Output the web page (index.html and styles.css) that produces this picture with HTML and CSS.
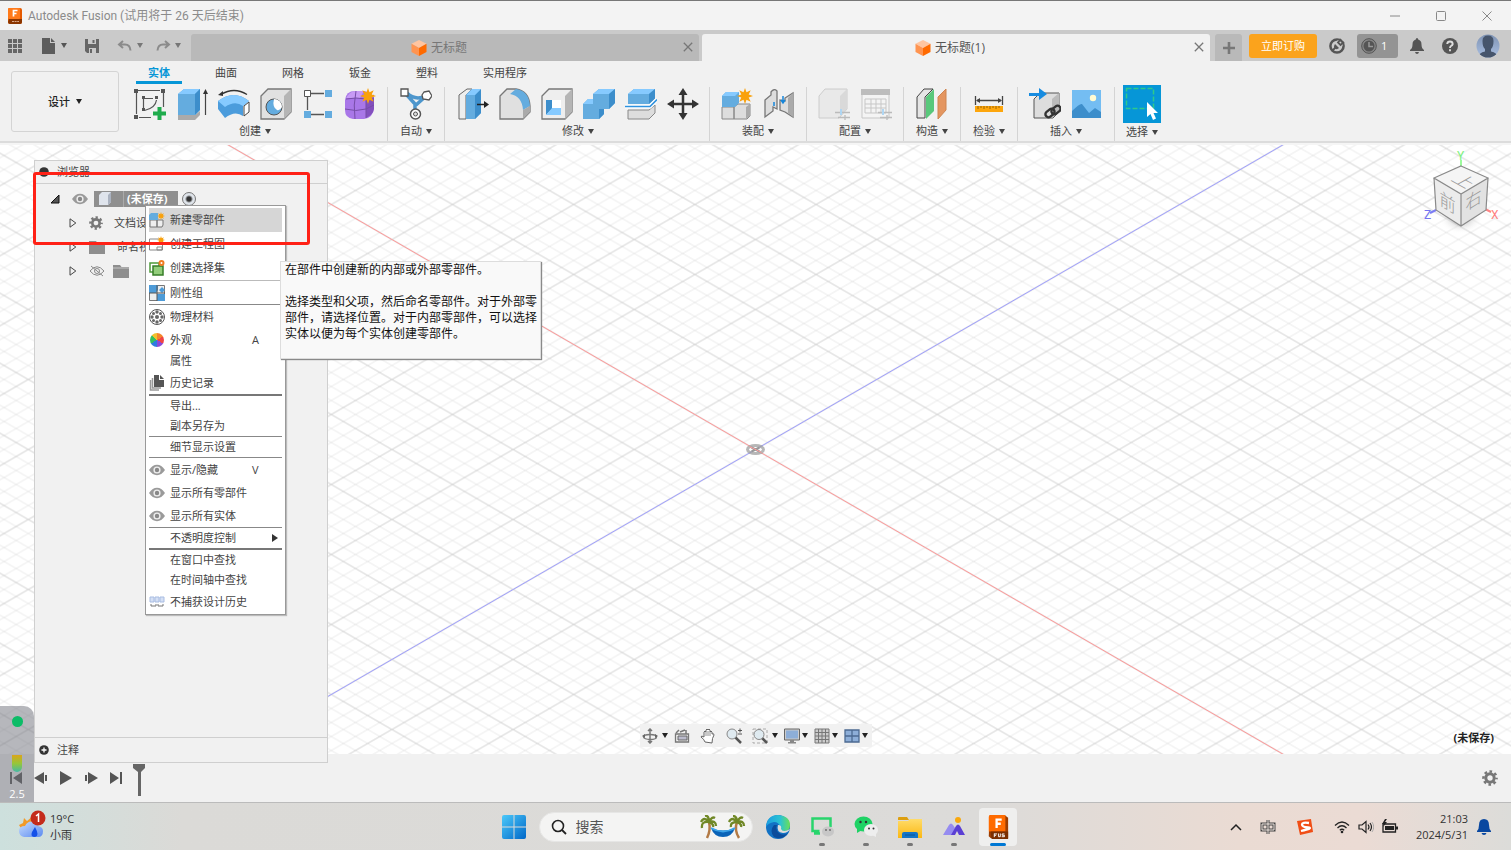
FILE: index.html
```html
<!DOCTYPE html>
<html lang="zh-CN">
<head>
<meta charset="utf-8">
<title>Autodesk Fusion</title>
<link rel="stylesheet" href="styles.css">
</head>
<body>
<svg class="defs" aria-hidden="true">
  <defs>
    <symbol id="caret" viewBox="0 0 6 5"><path d="M0 0h6L3 5z" fill="currentColor"/></symbol>
    <symbol id="eye" viewBox="0 0 16 12"><path d="M0 6Q3.500 .8 8 .8T16 6Q12.500 11.200 8 11.200T0 6z" fill="#9a9a9a"/><circle cx="8" cy="6" r="3.600" fill="#eee"/><circle cx="8" cy="6" r="2.200" fill="#888"/></symbol>
    <symbol id="gear" viewBox="0 0 16 16"><g fill="none" stroke="currentColor"><circle cx="8" cy="8" r="4.200" stroke-width="3"/><circle cx="8" cy="8" r="6.500" stroke-width="2.600" stroke-dasharray="2.600 2.505" stroke-dashoffset="1.300"/></g></symbol>
    <symbol id="folder" viewBox="0 0 16 13"><path d="M0 0h7l1.500 2H16v11H0z" fill="#8e8e8e"/><path d="M0 3h16" stroke="#c4c4c4"/></symbol>
    <symbol id="star" viewBox="0 0 16 16"><path d="M8 0l1.500 4.300L13.700 2.300 11.700 6.500 16 8l-4.300 1.500 2 4.200-4.200-2L8 16l-1.500-4.300-4.200 2 2-4.200L0 8l4.300-1.500-2-4.200 4.200 2z" fill="#f9a10b"/></symbol>
    <symbol id="cube" viewBox="0 0 16 16"><path d="M8 0l7.500 3.800L8 8 .5 3.800z" fill="#ffc5a0"/><path d="M.5 3.800L8 8v8L.5 12z" fill="#ff9450"/><path d="M15.500 3.800L8 8v8l7.500-4z" fill="#ff6a00"/></symbol>
    <symbol id="tri" viewBox="0 0 8 10"><path d="M1 .8L6.800 5 1 9.200z" fill="none" stroke="#444"/></symbol>
    <symbol id="cross" viewBox="0 0 10 10"><path d="M.8.8l8.400 8.400M9.200.8L.8 9.200" stroke="currentColor" stroke-width="1.300"/></symbol>
    <linearGradient id="win" x1="0" y1="0" x2="1" y2="1"><stop offset="0" stop-color="#4cc9fa"/><stop offset="1" stop-color="#0067c8"/></linearGradient>
    <linearGradient id="edgeA" x1="0" y1="0" x2="1" y2="0"><stop offset="0" stop-color="#1b9de2"/><stop offset=".6" stop-color="#2bc3d2"/><stop offset="1" stop-color="#6be054"/></linearGradient>
    <linearGradient id="avatar" x1="0" y1="0" x2="0" y2="1"><stop offset="0" stop-color="#7f93b3"/><stop offset="1" stop-color="#a9bfe2"/></linearGradient>
    <linearGradient id="folderG" x1="0" y1="0" x2="0" y2="1"><stop offset="0" stop-color="#ffdc6a"/><stop offset="1" stop-color="#fbb813"/></linearGradient>
    <linearGradient id="cloud" x1="0" y1="0" x2="1" y2="1"><stop offset="0" stop-color="#c8deff"/><stop offset="1" stop-color="#5b8af0"/></linearGradient>
  </defs>
</svg>

<div class="app">
  <header class="titlebar">
    <svg class="i16" viewBox="0 0 16 16"><rect x="1" width="14" height="16" rx="2" fill="#e55a00"/><rect x="1" width="12" height="11" rx="1" fill="#ff7a1a"/><path d="M2 11h13v3q0 2-2 2H3q-2 0-2-2z" fill="#8a3500"/><path d="M6.500 8.500V2.500h4M6.500 5.500h3" stroke="#fff" stroke-width="1.700" fill="none"/><path d="M5 13.500h7" stroke="#d9a98a" stroke-dasharray="2 .6"/></svg>
    <h1 class="title">Autodesk Fusion (试用将于 26 天后结束)</h1>
    <div class="winbtns">
      <button aria-label="最小化"><svg class="i12" viewBox="0 0 12 12"><path d="M1 6h10" stroke="#888"/></svg></button>
      <button aria-label="最大化"><svg class="i12" viewBox="0 0 12 12"><rect x="1.500" y="1.500" width="9" height="9" rx="1" fill="none" stroke="#888"/></svg></button>
      <button aria-label="关闭"><svg class="i12" viewBox="0 0 12 12"><path d="M1.500 1.500l9 9M10.500 1.500l-9 9" stroke="#888"/></svg></button>
    </div>
  </header>

  <div class="tabbar">
    <div class="quick">
      <button class="q1" aria-label="数据面板"><svg class="i16" viewBox="0 0 16 16" fill="#666"><path d="M1 1h4v4H1zM6 1h4v4H6zM11 1h4v4h-4zM1 6h4v4H1zM6 6h4v4H6zM11 6h4v4h-4zM1 11h4v4H1zM6 11h4v4H6zM11 11h4v4h-4z"/></svg></button>
      <button class="q2" aria-label="文件"><svg class="i16" viewBox="0 0 16 16"><path d="M1 0h8v5h5v11H1z" fill="#5c5c5c"/><path d="M10 0l4 4h-4z" fill="#5c5c5c"/></svg><svg class="caret"><use href="#caret"/></svg></button>
      <button class="q3" aria-label="保存"><svg class="i16" viewBox="0 0 16 16"><path d="M1 1h14v14H3l-2-2z" fill="#666"/><path d="M4 1h8v5H4zM5 10h7v5H5z" fill="#cacaca"/><path d="M8.500 2h2v3h-2zM6 11h2v4H6z" fill="#666"/></svg></button>
      <button class="q4" aria-label="撤消"><svg class="i16" viewBox="0 0 16 16"><path d="M6 3L2 6.500 6 10M2 6.500h6q5 0 5.500 6" fill="none" stroke="#8b8b8b" stroke-width="2"/></svg><svg class="caret"><use href="#caret"/></svg></button>
      <button class="q5" aria-label="恢复"><svg class="i16" viewBox="0 0 16 16"><path d="M10 3l4 3.500L10 10M14 6.500H8q-5 0-5.500 6" fill="none" stroke="#8b8b8b" stroke-width="2"/></svg><svg class="caret"><use href="#caret"/></svg></button>
    </div>
    <div class="doc doc-off"><svg class="i16"><use href="#cube"/></svg><span>无标题</span><button class="x" aria-label="关闭"><svg class="i10"><use href="#cross"/></svg></button></div>
    <div class="doc doc-on"><svg class="i16"><use href="#cube"/></svg><span>无标题(1)</span><button class="x" aria-label="关闭"><svg class="i10"><use href="#cross"/></svg></button></div>
    <button class="plus" aria-label="新建"><svg class="i12" viewBox="0 0 12 12"><path d="M6 0v12M0 6h12" stroke="#777" stroke-width="2.600"/></svg></button>
    <button class="buy">立即订购</button>
    <button class="t1" aria-label="扩展"><svg class="i16" viewBox="0 0 16 16"><circle cx="8" cy="8" r="6.600" fill="none" stroke="#555" stroke-width="2.500"/><path d="M9 2l-5 5 2 4 3 1 5-5-2-3z" fill="#cacaca"/><path d="M3.500 12.500l3-3M12 1l-3 3.500 2.500 2.500L15 4" stroke="#555" stroke-width="1.800" fill="none"/><path d="M6 6l4 4q-2 2-4 .5T6 6z" fill="#555"/></svg></button>
    <button class="jobs" aria-label="作业状态"><svg class="i16" viewBox="0 0 16 16"><circle cx="8" cy="8" r="7.300" fill="#888" stroke="#555"/><circle cx="8" cy="8" r="5.500" fill="#555"/><path d="M8 4v4.500h4" stroke="#999" stroke-width="1.500" fill="none"/></svg><span>1</span></button>
    <button class="t2" aria-label="通知"><svg class="i16" viewBox="0 0 16 16" fill="#555"><path d="M8 0q1.200 0 1.200 1.600Q12.500 2.500 12.500 6.500q0 4 2.500 5.500v1H1v-1q2.500-1.500 2.500-5.500 0-4 3.300-4.900Q6.800 0 8 0zM6 14h4q-.5 2-2 2t-2-2z"/></svg></button>
    <button class="t2" aria-label="帮助"><svg class="i16" viewBox="0 0 16 16"><circle cx="8" cy="8" r="8" fill="#555"/><path d="M5.200 6q.2-2.500 2.800-2.500T10.700 6Q10.500 7.200 9 8 8 8.600 8 10M8 11.300v2" stroke="#ddd" stroke-width="1.900" fill="none"/></svg></button>
    <button class="me" aria-label="账户"><svg class="i24" viewBox="0 0 24 24"><clipPath id="ac"><circle cx="12" cy="12" r="11.500"/></clipPath><g clip-path="url(#ac)"><path d="M0 0h24v24H0z" fill="url(#avatar)"/><path d="M6.500 7q0-5.500 5.500-5.500T17.500 7q0 6-2.500 8v2.500q6 1 8 6.500H1q2-5.500 8-6.500V15Q6.500 13 6.500 7z" fill="#46556c"/></g></svg></button>
  </div>

  <div class="ribbon">
    <button class="workspace">设计 <svg class="caret"><use href="#caret"/></svg></button>
    <div class="tools">
      <nav class="rtabs">
        <button class="on">实体</button><button>曲面</button><button>网格</button><button>钣金</button><button>塑料</button><button>实用程序</button>
      </nav>
      <div class="groups">
        <section class="group"><div class="icons">
          <button aria-label="创建草图"><svg class="i32" viewBox="0 0 32 32"><g stroke="#555" fill="none" stroke-width="1.200"><path d="M4 2.500h22M2.500 4v22M29.500 5v14M5 29.500h12M10 10.500h9M9.500 11v10M22.500 12q-1 8-12 10.500"/></g><path d="M0 1h4v4H0zM27 1h4v4h-4zM0 27h4v4H0zM8 8h3v3H8zM21 8h3v3h-3zM8 20h3v3H8z" fill="#555"/><path d="M19 25.500h13M25.500 19v13" stroke="#1fab4c" stroke-width="4"/></svg></button>
          <button aria-label="拉伸"><svg class="i32" viewBox="0 0 32 32"><path d="M2 27h17l5-4v4l-5 5H2z" fill="#aaa"/><path d="M2 6l6-5h16v21l-5 5H2z" fill="#64acdf"/><path d="M2 6l6-5h16l-5 5z" fill="#86caff"/><path d="M19 6l5-5v21l-5 5z" fill="#3d8ecb"/><path d="M29.500 27V4" stroke="#444" stroke-width="1.200"/><path d="M27 6l2.500-5L32 6z" fill="#333"/></svg></button>
          <button aria-label="旋转"><svg class="i32" viewBox="0 0 32 32"><path d="M0 13q16-12 31 0l-6 5v10q-8-6-18 2L0 21z" fill="#4b9cdc"/><path d="M0 13q16-12 31 0l-6 5q-8-6-18 1z" fill="#86caff"/><path d="M26 18l5-4v10l-5 4z" fill="#fff" stroke="#444"/><path d="M3 6.500q13-8 26 0" fill="none" stroke="#333" stroke-width="1.300"/><path d="M0 7l5-4v5z" fill="#333"/></svg></button>
          <button aria-label="孔"><svg class="i32" viewBox="0 0 32 32"><path d="M1 8l7-7h23v23l-7 7H1z" fill="#e1e1e1" stroke="#777" stroke-width="1.300"/><path d="M24 8l7-7v23l-7 7z" fill="#b5b5b5"/><circle cx="14" cy="19" r="8" fill="#64acdf" stroke="#555"/><path d="M14 11a8 8 0 018 8q-2 4-5 3-5-3-3-11z" fill="#fff"/></svg></button>
          <button aria-label="阵列"><svg class="i32" viewBox="0 0 32 32"><path d="M9 5.500h13M5.500 9v13M9 26.500h13" stroke="#555" stroke-width="1.300"/><path d="M2.500 2.500h6v6h-6z" fill="#fff" stroke="#555"/><path d="M23 2h7v7h-7zM2 23h7v7H2zM23 23h7v7h-7z" fill="#64acdf"/></svg></button>
          <button aria-label="创建形状"><svg class="i32" viewBox="0 0 32 32"><path d="M1 12Q2 3 11 3h9q8 1 10 8v9q-1 10-10 11H9q-8-1-8-9z" fill="#a977e8"/><path d="M2 11q3-8 10-8h8l-4 7H3z" fill="#c79af5"/><path d="M22 12l8-3v12q-1 6-8 9z" fill="#8350bd"/><path d="M2 11q10-2 20 0 5-1 8-4M12 3q-3 14-1 28M22 10v20M1 21q11 3 21 0l8-4" fill="none" stroke="#764da7"/><use href="#star" x="16" y="0" width="16" height="16"/></svg></button>
        </div><button class="glabel">创建 <svg class="caret"><use href="#caret"/></svg></button></section>
        <section class="group solo"><div class="icons">
          <button aria-label="自动建模"><svg class="i32" viewBox="0 0 32 32"><path d="M6 6l9 10v9M26 8L16 17M7 5q8 8 19 3" fill="none" stroke="#4d96cc" stroke-width="3.500"/><path d="M1 1h7v7H1zM24 4l5-1 3 5-3 4-6-1-1-4z" fill="#fff" stroke="#555" stroke-width="1.300"/><circle cx="15.500" cy="26" r="5" fill="#fff" stroke="#555" stroke-width="1.500"/><circle cx="15.500" cy="26" r="2" fill="#ddd" stroke="#555"/></svg></button>
        </div><button class="glabel">自动 <svg class="caret"><use href="#caret"/></svg></button></section>
        <section class="group modify"><div class="icons">
          <button aria-label="按拉"><svg class="i32" viewBox="0 0 32 32"><path d="M10 1l-8 6v24h7V7l6-6z" fill="#eee" stroke="#666"/><path d="M9 7l6-6h9v24l-6 6H9z" fill="#64acdf"/><path d="M18 7l6-6v24l-6 6z" fill="#3d8ecb"/><path d="M9 7l6-6h9l-6 6z" fill="#86caff"/><path d="M20 16.500h9" stroke="#222" stroke-width="1.500"/><path d="M27 13l5 3.500-5 3.500z" fill="#222"/></svg></button>
          <button aria-label="圆角"><svg class="i32" viewBox="0 0 32 32"><path d="M1 8l7-7h9q13 2 14 17v6l-7 7H1z" fill="#e0e0e0" stroke="#777" stroke-width="1.300"/><path d="M11 6l6-5q13 2 14 17l-7 4Q23 8 11 6z" fill="#64acdf"/><path d="M24 22l7-4v6l-7 7z" fill="#aaa"/></svg></button>
          <button aria-label="抽壳"><svg class="i32" viewBox="0 0 32 32"><path d="M1 8l7-7h23v23l-7 7H1z" fill="#eee" stroke="#777" stroke-width="1.300"/><path d="M24 8l7-7v23l-7 7z" fill="#b5b5b5"/><path d="M5 12h15v15H5z" fill="#fff"/><path d="M5 12h6v9l-6 6z" fill="#3d8ecb"/><path d="M5 27l6-7h9v7z" fill="#86caff"/></svg></button>
          <button aria-label="合并"><svg class="i32" viewBox="0 0 32 32"><path d="M0 16l5-5h5V6l6-5h16v14l-6 6h-5v5l-5 5H0z" fill="#64acdf"/><path d="M10 6l6-5h16l-6 5zM0 16l5-5h5v5z" fill="#86caff"/><path d="M26 6l6-5v14l-6 6zM16 21h5v5l-5 5z" fill="#3d8ecb"/></svg></button>
          <button aria-label="分割实体"><svg class="i32" viewBox="0 0 32 32"><path d="M3 6l6-5h21v10l-6 5H3z" fill="#64acdf"/><path d="M3 6l6-5h21l-6 5z" fill="#86caff"/><path d="M24 6l6-5v10l-6 5z" fill="#3d8ecb"/><path d="M3 22h21l6-5v8l-6 6H3z" fill="#ddd" stroke="#888"/><path d="M0 18.500h25l7-7" fill="none" stroke="#fff" stroke-width="4"/><path d="M0 18.500h25l7-7" fill="none" stroke="#2f92de" stroke-width="1.600"/></svg></button>
          <button aria-label="移动"><svg class="i32" viewBox="0 0 32 32"><path d="M16 4v24M4 16h24" stroke="#333" stroke-width="2.500"/><path d="M11.500 7L16 0l4.500 7zM11.500 25l4.500 7 4.500-7zM7 11.500L0 16l7 4.500zM25 11.500l7 4.500-7 4.500z" fill="#333"/></svg></button>
        </div><button class="glabel">修改 <svg class="caret"><use href="#caret"/></svg></button></section>
        <section class="group"><div class="icons">
          <button aria-label="新建零部件"><svg class="i32" viewBox="0 0 32 32"><path d="M1 19h12v12H1zM13 19l4-3h12v12l-3 3H13z" fill="#ddd" stroke="#888"/><path d="M1 8l4-4h13v11l-4 4H1z" fill="#64acdf"/><path d="M1 8l4-4h13l-4 4z" fill="#86caff"/><path d="M25 19l4-3v12l-4 3z" fill="#aaa"/><use href="#star" x="16" y="0" width="16" height="16"/></svg></button>
          <button aria-label="联接"><svg class="i32" viewBox="0 0 32 32"><path d="M2 12l6-5V4q3-4 6-1v18l-4-2v4l-8 6z" fill="#ddd" stroke="#777" stroke-width="1.300"/><path d="M30 5v24l-8-5-5-2V12l5 1v-3z" fill="#ddd" stroke="#777" stroke-width="1.300"/><path d="M30 5v24l-5-4V10z" fill="#aaa"/><path d="M11 14v4M20 8v6M18 12l2 3 2-3" fill="none" stroke="#1686db" stroke-width="1.500"/></svg></button>
        </div><button class="glabel">装配 <svg class="caret"><use href="#caret"/></svg></button></section>
        <section class="group"><div class="icons">
          <button aria-label="配置零件" disabled><svg class="i32" viewBox="0 0 32 32"><path d="M1 8l6-7h22v20l-8 9H1z" fill="#e9e9e9" stroke="#ccc"/><path d="M22 8l7-7v20l-7 7z" fill="#d9d9d9"/><path d="M17 24.500h15M20 29.500h12M27 27v5" stroke="#bbb" stroke-width="1.300"/><path d="M23 21v6" stroke="#afd6f3" stroke-width="2"/></svg></button>
          <button aria-label="配置表" disabled><svg class="i32" viewBox="0 0 32 32"><path d="M2 3h27v27H2z" fill="#f4f4f4" stroke="#c7c7c7"/><path d="M1 1h29v6H1z" fill="#bdbdbd"/><path d="M5 11h21v14H5zM5 16h21M5 20h21M11 11v14M16 11v14M21 11v14" fill="none" stroke="#c7c7c7"/><path d="M18 24.500h14M20 29.500h12M27 27v5" stroke="#bbb" stroke-width="1.300"/><path d="M23 21v6" stroke="#afd6f3" stroke-width="2"/></svg></button>
        </div><button class="glabel">配置 <svg class="caret"><use href="#caret"/></svg></button></section>
        <section class="group solo"><div class="icons">
          <button aria-label="偏移平面"><svg class="i32" viewBox="0 0 32 32"><path d="M1 9l7-8h9l-8 8v21H1z" fill="#e5e5e5" stroke="#444"/><path d="M10 9l8-8v22l-8 8z" fill="#58c87b"/><path d="M22 9l8-8v21l-8 9z" fill="#e49660" stroke="#cf8550"/></svg></button>
        </div><button class="glabel">构造 <svg class="caret"><use href="#caret"/></svg></button></section>
        <section class="group solo"><div class="icons">
          <button aria-label="测量"><svg class="i32" viewBox="0 0 32 32"><path d="M2.500 8v9M29.500 8v9M4 12.500h24" stroke="#444" stroke-width="1.300"/><path d="M3 12.500l4-2.500v5zM29 12.500L25 10v5z" fill="#444"/><path d="M2 18h28v6H2z" fill="#fda60c"/><path d="M5 18v3M8 18v2M11 18v3M14 18v2M17 18v3M20 18v2M23 18v3M26 18v2" stroke="#805400" stroke-width=".8"/></svg></button>
        </div><button class="glabel">检验 <svg class="caret"><use href="#caret"/></svg></button></section>
        <section class="group"><div class="icons">
          <button aria-label="插入衍生"><svg class="i32" viewBox="0 0 32 32"><path d="M5 11l6-6h19v19l-6 6H5z" fill="#ddd" stroke="#555"/><path d="M23 11l7-6v19l-7 6z" fill="#bbb"/><path d="M0 5h10V0l8 6-8 6V8H0z" fill="#168be0"/><g fill="none" stroke="#333" stroke-width="2.400"><rect x="16" y="22" width="10" height="6" rx="3" transform="rotate(-38 21 25)"/><rect x="22" y="19" width="10" height="6" rx="3" transform="rotate(-38 27 22)"/></g></svg></button>
          <button aria-label="画布"><svg class="i32" viewBox="0 0 32 32"><path d="M1 2h29v28H1z" fill="#74bdf2"/><circle cx="22" cy="10" r="3.200" fill="#fffbd2"/><path d="M1 23q8-8 10-7l7 9 6-5 6 4v6H1z" fill="#3d8ecb"/></svg></button>
        </div><button class="glabel">插入 <svg class="caret"><use href="#caret"/></svg></button></section>
        <section class="group last"><div class="icons">
          <button class="select" aria-label="选择"><svg class="i38" viewBox="0 0 38 38"><path d="M3.500 3.500h27v20h-27z" fill="none" stroke="#2fc98b" stroke-width="1.500" stroke-dasharray="5 2"/><path d="M24 17v15l3.500-3 2.500 6 3-1.500-2.500-5.500H35z" fill="#fff"/></svg></button>
        </div><button class="glabel">选择 <svg class="caret"><use href="#caret"/></svg></button></section>
      </div>
    </div>
  </div>

  <main class="canvas">
    <svg class="grid" aria-hidden="true">
      <defs>
        <pattern id="iso" width="121.200" height="70" patternUnits="userSpaceOnUse">
          <path stroke="#e8e8e8" stroke-width=".9" d="M0-56l121.200 70M0-42l121.200 70M0-28l121.200 70M0-14l121.200 70M0 14l121.200 70M0 28l121.200 70M0 42l121.200 70M0 56l121.200 70M0 14l121.200-70M0 28l121.200-70M0 42l121.200-70M0 56l121.200-70M0 84l121.200-70M0 98l121.200-70M0 112l121.200-70M0 126l121.200-70"/>
          <path stroke="#d2d2d2" d="M0 0l121.200 70M0 70L121.200 0"/>
        </pattern>
      </defs>
      <svg x="50%" y="50%" overflow="visible">
        <rect x="-1939.200" y="-1050" width="3878.400" height="2100" fill="url(#iso)"/>
        <path d="M-1212-700L1212 700" stroke="#ff9a9a"/><path d="M-1212 700L1212-700" stroke="#a0a0ff"/>
        <ellipse cx="0" cy="0" rx="8" ry="4" fill="none" stroke="#999" stroke-opacity=".7" stroke-width="3"/>
        <path d="M-4-2L4 2M-4 2l8-4" stroke="#999" stroke-width="2"/><path d="M-6-3L6 3" stroke="#ff9e9e"/>
      </svg>
    </svg>

    <svg class="viewcube" viewBox="0 0 76 86" role="img" aria-label="ViewCube">
      <defs><radialGradient id="sh"><stop offset="0" stop-color="#777"/><stop offset="1" stop-color="#fff" stop-opacity="0"/></radialGradient></defs>
      <ellipse cx="38" cy="68" rx="22" ry="16" fill="url(#sh)" opacity=".7"/>
      <path d="M38 16V10" stroke="#7dfa7d" stroke-width="1.500"/><path d="M13 60l-6 3" stroke="#7b7bf5" stroke-width="2"/><path d="M62 59l6 3" stroke="#ff8585" stroke-width="2"/>
      <path d="M38 16l27 12-27 16L11 28z" fill="#f5f5f5"/><path d="M11 28l27 16v32L13 60z" fill="#ececec"/><path d="M65 28L38 44v32l25-16z" fill="#e2e2e2"/>
      <path d="M38 16l27 12-27 16L11 28zM11 28l2 32 25 16 25-16 2-32M38 44v32" fill="none" stroke="#8a8a8a" stroke-width="1.200"/>
      <text class="face" transform="matrix(.9 .5 -.9 .5 38 23)" x="1" y="13">上</text>
      <text class="face" transform="matrix(.9 .55 0 1 13 32)" x="4" y="20">前</text>
      <text class="face" transform="matrix(.9 -.55 0 1 38 44)" x="5" y="20">右</text>
      <text class="axis y" x="34" y="10">Y</text><text class="axis z" x="1" y="69">Z</text><text class="axis xx" x="68" y="69">X</text>
    </svg>

    <aside class="browser">
      <div class="bhead"><svg class="i10" viewBox="0 0 10 10"><circle cx="5" cy="5" r="4.800" fill="#333"/></svg><span>浏览器</span></div>
      <div class="tree">
        <div class="row root"><svg class="i10" viewBox="0 0 10 10"><path d="M9 1v8H1z" fill="#555" stroke="#111"/></svg><svg class="eye"><use href="#eye"/></svg>
          <span class="node"><svg class="i16" viewBox="0 0 16 16"><path d="M2 4l3-3h9v10l-3 3H2z" fill="#dfe4ec"/><path d="M11 4l3-3v10l-3 3z" fill="#aab2c0"/></svg><b>(未保存)</b></span><input type="radio" checked aria-label="激活零部件"></div>
        <div class="row"><svg class="tri"><use href="#tri"/></svg><svg class="gear"><use href="#gear"/></svg><span>文档设置</span></div>
        <div class="row"><svg class="tri"><use href="#tri"/></svg><svg class="folder"><use href="#folder"/></svg><span>命名视图</span></div>
        <div class="row deep"><svg class="tri"><use href="#tri"/></svg><svg class="eye" viewBox="0 0 16 12"><path d="M1 6Q8-2.500 15 6 8 14.500 1 6z" fill="none" stroke="#888"/><circle cx="8" cy="6" r="2.500" fill="none" stroke="#888"/><path d="M2 1l12 10" stroke="#888"/></svg><svg class="folder"><use href="#folder"/></svg><span>原点</span></div>
      </div>
      <div class="bfoot"><svg class="i10" viewBox="0 0 10 10"><circle cx="5" cy="5" r="4.800" fill="#333"/><path d="M5 2.500v5M2.500 5h5" stroke="#fff" stroke-width="1.300"/></svg><span>注释</span></div>
    </aside>

    <div class="menu" role="menu">
      <button class="mi tall hot"><svg class="i16" viewBox="0 0 16 16"><path d="M1 8h7v7H1zM8 8h6v5l-1 2H8z" fill="#eee" stroke="#777"/><path d="M0 3l2-2h7v7H0z" fill="#64acdf"/><use href="#star" x="8" y="0" width="8" height="8"/></svg><span>新建零部件</span></button>
      <button class="mi tall"><svg class="i16" viewBox="0 0 16 16"><path d="M.500 3h13v11H.500zM3 8h5M8 11h5v3H8z" fill="#fff" stroke="#888"/><use href="#star" x="8" y="0" width="8" height="8"/></svg><span>创建工程图</span></button>
      <button class="mi tall"><svg class="i16" viewBox="0 0 16 16"><path d="M1 3h9v9H1z" fill="none" stroke="#4d9a3a" stroke-width="1.500"/><path d="M4 6h10v9H4z" fill="#93cd7b" stroke="#377d28" stroke-width="1.500"/><circle cx="12.500" cy="3" r="2" fill="#fff" stroke="#f07c22" stroke-width="2"/></svg><span>创建选择集</span></button>
      <hr>
      <button class="mi icon"><svg class="i16" viewBox="0 0 16 16"><path d="M.500.500h15v15H.500z" fill="#eee" stroke="#777"/><path d="M0 0h9v5L7 8H0zM8 9h8v7H8zM10 5l3-3 3 3-3 3z" fill="#4d9bd8"/><path d="M8 0v16M0 8h16" stroke="#555"/></svg><span>刚性组</span></button>
      <hr class="dark">
      <button class="mi icon"><svg class="i16" viewBox="0 0 16 16"><circle cx="8" cy="8" r="7.500" fill="#fff" stroke="#555"/><g fill="#666"><circle cx="8" cy="8" r="2"/><circle cx="8" cy="3" r="1.700"/><circle cx="8" cy="13" r="1.700"/><circle cx="3" cy="8" r="1.700"/><circle cx="13" cy="8" r="1.700"/><circle cx="4.500" cy="4.500" r="1.500"/><circle cx="11.500" cy="4.500" r="1.500"/><circle cx="4.500" cy="11.500" r="1.500"/><circle cx="11.500" cy="11.500" r="1.500"/></g></svg><span>物理材料</span></button>
      <button class="mi icon"><i class="wheel"></i><span>外观</span><kbd>A</kbd></button>
      <button class="mi"><span>属性</span></button>
      <button class="mi icon"><svg class="i16" viewBox="0 0 16 16"><path d="M1.500 5v10H10M3.500 3v10H12" stroke="#999" stroke-width="1.500" fill="none"/><path d="M5 0h5v5h5v7H5z" fill="#555"/><path d="M11 0l4 4h-4z" fill="#555"/></svg><span>历史记录</span></button>
      <hr class="thick">
      <button class="mi"><span>导出...</span></button>
      <button class="mi"><span>副本另存为</span></button>
      <hr class="dark">
      <button class="mi"><span>细节显示设置</span></button>
      <hr class="dark">
      <button class="mi icon"><svg class="eye"><use href="#eye"/></svg><span>显示/隐藏</span><kbd>V</kbd></button>
      <button class="mi icon"><svg class="eye"><use href="#eye"/></svg><span>显示所有零部件</span></button>
      <button class="mi icon"><svg class="eye"><use href="#eye"/></svg><span>显示所有实体</span></button>
      <hr class="dark">
      <button class="mi"><span>不透明度控制</span><svg class="sub" viewBox="0 0 6 8"><path d="M0 0l6 4-6 4z" fill="#333"/></svg></button>
      <hr class="thick">
      <button class="mi"><span>在窗口中查找</span></button>
      <button class="mi"><span>在时间轴中查找</span></button>
      <button class="mi icon"><svg class="i16" viewBox="0 0 16 16"><path d="M1 3h4v5H1zM6 3h4v5H6zM11 3h4v5h-4z" fill="#d5e0f5" stroke="#a9bde2"/><path d="M2 10v2h5v-2M9 10v2h5v-2" fill="none" stroke="#777"/></svg><span>不捕获设计历史</span></button>
    </div>

    <div class="tip" role="tooltip"><p>在部件中创建新的内部或外部零部件。</p><p>选择类型和父项，然后命名零部件。对于外部零<br>部件，请选择位置。对于内部零部件，可以选择<br>实体以便为每个实体创建零部件。</p></div>

    <div class="mark"></div>

    <div class="navbar">
      <button class="wide" aria-label="动态观察"><svg class="i16" viewBox="0 0 16 16"><path d="M8 1v14M6 3l2-2 2 2M6 13l2 2 2-2" stroke="#777" fill="none" stroke-width="1.500"/><ellipse cx="8" cy="9" rx="6.500" ry="2.500" fill="none" stroke="#777" stroke-width="1.300"/><path d="M0 8l3-2v4zM16 8l-3-2v4z" fill="#666"/></svg><svg class="caret"><use href="#caret"/></svg></button>
      <button aria-label="观察方向"><svg class="i16" viewBox="0 0 16 16"><path d="M1.500 6h13v8h-13z" fill="#eee" stroke="#777" stroke-width="1.300"/><path d="M4 8h9v4H4z" fill="#bbc" stroke="#666"/><path d="M2 5l3-3M6 4l5-2M12 2v4" stroke="#777" stroke-width="1.500"/></svg></button>
      <button aria-label="平移"><svg class="i16" viewBox="0 0 16 16"><path d="M5 14q-1-3-4-5 0-2 3 0V4q1-2 2 0V2q1-2 2 0 1-2 2 0v2q1-2 2 0v2q2-1 2 1-2 3-2 8z" fill="#fff" stroke="#666"/><path d="M6 4v4M8 3v5M10 4v4" stroke="#777" stroke-width=".8"/></svg></button>
      <button aria-label="缩放"><svg class="i16" viewBox="0 0 16 16"><path d="M9 9l6 6" stroke="#555" stroke-width="2.500"/><circle cx="6" cy="6" r="5" fill="#dfeaf0" stroke="#888"/><path d="M12 2.500h4M14 .500v4M12 6h4" stroke="#555"/></svg></button>
      <button class="wide" aria-label="窗口缩放"><svg class="i16" viewBox="0 0 16 16"><path d="M1 1h14v14H1z" fill="none" stroke="#aaa" stroke-dasharray="3 2"/><path d="M10 10l5 5" stroke="#555" stroke-width="2.500"/><circle cx="7" cy="6.500" r="5" fill="#dfeaf0" stroke="#888"/></svg><svg class="caret"><use href="#caret"/></svg></button>
      <button class="duo" aria-label="显示设置"><svg class="i16" viewBox="0 0 16 16"><path d="M.500 1h15v11H.500z" fill="#ccc" stroke="#666"/><path d="M2 2.500h12v8H2z" fill="#8daed8"/><path d="M6 12h4v2h2v1.500H4V14h2z" fill="#888"/></svg><svg class="caret"><use href="#caret"/></svg></button>
      <button class="duo" aria-label="栅格和捕捉"><svg class="i16" viewBox="0 0 16 16"><path d="M1 1h14v14H1z" fill="#ccc"/><path d="M1 1h14v14H1zM4.500 1v14M8 1v14M11.500 1v14M1 4.500h14M1 8h14M1 11.500h14" fill="none" stroke="#777"/></svg><svg class="caret"><use href="#caret"/></svg></button>
      <button class="duo" aria-label="视口"><svg class="i16" viewBox="0 0 16 16"><path d="M1 2h14v12H1z" fill="#8daed8"/><path d="M1 2h14v12H1zM8 2v12M1 8h14" fill="none" stroke="#4c6a91" stroke-width="1.300"/></svg><svg class="caret"><use href="#caret"/></svg></button>
    </div>
    <strong class="docname">(未保存)</strong>
  </main>

  <footer class="timeline">
    <button aria-label="起点"><svg class="i16" viewBox="0 0 16 16" fill="#555"><path d="M2 2h2v12H2zM14 2v12L5 8z"/></svg></button>
    <button aria-label="后退"><svg class="i16" viewBox="0 0 16 16" fill="#555"><path d="M11 2v12L1 8zM12 5h2v6h-2z"/></svg></button>
    <button aria-label="播放"><svg class="i16" viewBox="0 0 16 16" fill="#555"><path d="M2 1l12 7-12 7z"/></svg></button>
    <button aria-label="前进"><svg class="i16" viewBox="0 0 16 16" fill="#555"><path d="M5 2v12l10-6zM2 5h2v6H2z"/></svg></button>
    <button aria-label="终点"><svg class="i16" viewBox="0 0 16 16" fill="#555"><path d="M12 2h2v12h-2zM2 2v12l9-6z"/></svg></button>
    <svg class="marker" viewBox="0 0 12 32"><path d="M0 0h12v4L8 8v24H5V8L0 4z" fill="#666"/></svg>
    <button class="set" aria-label="时间轴设置"><svg class="i16"><use href="#gear"/></svg></button>
    <div class="meter"><i class="dot"></i><i class="level"></i><span>2.5</span></div>
  </footer>

  <div class="taskbar">
    <button class="weather"><svg class="wx" viewBox="0 0 28 30"><path d="M6 8l3 3 6-5v14H4l-3-5 4-2z" fill="#f19a2a"/><path d="M1 21q0-5 6-5 3-6 9-4 4 2 4 4 5 1 5 5 0 6-5 6H6q-5-1-5-6z" fill="url(#cloud)"/><path d="M17 17q5 9 0 10-5 0-3-5z" fill="#1450e8"/><circle cx="20" cy="8" r="7.500" fill="#c42b1c"/><path d="M18 6l2.500-2v8" stroke="#fff" stroke-width="1.500" fill="none"/></svg><span>19°C<br>小雨</span></button>
    <div class="dock">
      <button class="app-i" aria-label="开始"><svg class="i24" viewBox="0 0 24 24" fill="url(#win)"><path d="M0 2q0-2 2-2h9.500v11.500H0zM12.500 0H22q2 0 2 2v9.500H12.500zM0 12.500h11.500V24H2q-2 0-2-2zM12.500 12.500H24V22q0 2-2 2h-9.500z"/></svg></button>
      <label class="search"><svg class="i16" viewBox="0 0 16 16"><circle cx="7" cy="7" r="5.500" fill="none" stroke="#222" stroke-width="1.600"/><path d="M11 11l4 4" stroke="#222" stroke-width="1.800"/></svg><input type="text" placeholder="搜索" aria-label="搜索">
        <svg class="palms" viewBox="0 0 46 24"><path d="M7 23q4-8 2-16M39 23q-5-8-2-16" fill="none" stroke="#b37a45" stroke-width="2.500"/><path d="M11 13q12 5 24 0-3 9-12 9T11 13z" fill="#0a63b8"/><path d="M11 13q12 7 24 0" fill="none" stroke="#3da5ea" stroke-width="2"/><path d="M9 7Q4 1 1 7M9 7Q1 6 2 13M9 7Q9 0 5 1M9 7q3-6 6-4M9 7q7-2 7 4M9 7q5 2 4 5M37 7q-5-6-8 0M37 7q-7 0-6 5M37 7q0-6-4-6M37 7q3-6 6-4M37 7q7-2 7 4M37 7q5 2 4 5" fill="none" stroke="#708827" stroke-width="2.300"/></svg></label>
      <button class="app-i" aria-label="Edge"><svg class="i24" viewBox="0 0 24 24"><circle cx="12" cy="12" r="12" fill="#1272c4"/><path d="M0 12Q1 0 12 0q12 1 12 10 0 6-6 6-5 0-4-4Q13 7 8 7 2 8 0 12z" fill="url(#edgeA)"/><path d="M8 10q-5 6 0 12 8 4 14-4-5 3-9 0-4-3-2-8z" fill="#0b4c9b"/><path d="M12 10q4 0 3 4 2 4 9 0-2 4-7 4-7-1-5-8z" fill="#dedddb"/></svg></button>
      <button class="app-i run" aria-label="远程"><svg class="i24" viewBox="0 0 24 24"><path d="M4 18.500h6M2.500 15V3.500h18V12M2.500 14v2h7" fill="none" stroke="#28d56c" stroke-width="2.500"/><ellipse cx="18" cy="16.500" rx="6" ry="5" fill="#c7c7c7"/><circle cx="16" cy="15" r=".9" fill="#666"/><circle cx="20" cy="15" r=".9" fill="#666"/></svg></button>
      <button class="app-i run" aria-label="微信"><svg class="i24" viewBox="0 0 24 24"><ellipse cx="9.500" cy="9" rx="9" ry="7.500" fill="#1fd265"/><path d="M3 13v5l5-3z" fill="#1fd265"/><ellipse cx="17" cy="15" rx="7" ry="6" fill="#eee"/><path d="M18 20l4 2v-4z" fill="#eee"/><g fill="#333"><circle cx="6.500" cy="7" r="1.200"/><circle cx="12" cy="7" r="1.200"/><circle cx="15" cy="13.500" r="1"/><circle cx="19.500" cy="13.500" r="1"/></g></svg></button>
      <button class="app-i run" aria-label="文件资源管理器"><svg class="i24" viewBox="0 0 24 24"><path d="M0 3q0-1 1-1h8l2 3H0z" fill="#dd9f10"/><path d="M0 6h10l2-2h12v19H0z" fill="url(#folderG)"/><path d="M4 23v-4q0-2 2-2h12q2 0 2 2v4z" fill="#1575c7"/><path d="M7 20h10" stroke="#0c5798"/></svg></button>
      <button class="app-i run" aria-label="应用"><svg class="i24" viewBox="0 0 24 24"><circle cx="16" cy="5" r="3" fill="#f9a80d"/><path d="M1 20L7 10q2-3 4 0l2 3-3 7H7z" fill="#968cf0"/><path d="M9 20l5-9q2-3 4 0l5 9h-6l-2-4-2 4z" fill="#5b3fd4"/></svg></button>
      <button class="app-i run active" aria-label="Fusion"><svg class="i24" viewBox="0 0 24 26"><path d="M3 0h16l4 3v22H4L2 23z" fill="#9d3d00"/><path d="M2 2q0-2 2-2h16v18H2z" fill="#ff6b00"/><path d="M4 18h19v8H5z" fill="#7a2e00"/><path d="M10.500 14V5H16M10.500 9.500H15" stroke="#fff" stroke-width="2.500" fill="none"/><path d="M8 20v4M8 20.500h3M8 22h2M12.500 20v3.500h2V20M19 20.500h-2.500V22H19v1.500h-3" stroke="#fff" fill="none"/></svg></button>
    </div>
    <div class="tray">
      <button aria-label="显示隐藏的图标"><svg class="i12" viewBox="0 0 12 12"><path d="M1 9l5-5 5 5" fill="none" stroke="#222" stroke-width="1.500"/></svg></button>
      <button class="ime" aria-label="输入法"><svg class="i16" viewBox="0 0 16 16"><path d="M2 5h12v6H2zM8 1v14" fill="none" stroke="#444" stroke-width="3"/><path d="M2 5h12v6H2zM8 1v14" fill="none" stroke="#f2e8e2"/></svg></button>
      <button class="sogou" aria-label="搜狗"><svg class="i16" viewBox="0 0 16 16"><path d="M0 2l14-2 2 13-13 3z" fill="#f04e16"/><path d="M12 4Q5 3 5 5.500T11 8.500 4 12" fill="none" stroke="#fff" stroke-width="2.300"/></svg></button>
      <button class="net" aria-label="网络和声音"><svg class="i16" viewBox="0 0 16 16"><path d="M1 6.500q7-7 14 0M3.500 9q4.500-4.500 9 0M5.800 11.300q2.200-2 4.400 0" fill="none" stroke="#222" stroke-width="1.300"/><circle cx="8" cy="13" r="1.300" fill="#222"/></svg><svg class="i16" viewBox="0 0 16 16"><path d="M1 6h3l4-3.500v11L4 10H1zM10 5.500q2 2.500 0 5M12 4q3 4 0 8" fill="none" stroke="#222" stroke-width="1.200"/><path d="M14 3q3.500 5 0 10" fill="none" stroke="#aaa"/></svg><svg class="i16" viewBox="0 0 16 16"><path d="M1 5h12.500v8H1z" fill="none" stroke="#222" stroke-width="1.300"/><path d="M3 7h9v4H3zM14 7.500h2v3h-2z" fill="#222"/><path d="M3 0L0 5h2L1 8l4-5H3l2-3z" fill="#222"/></svg></button>
      <time>21:03<br>2024/5/31</time>
      <button class="bell" aria-label="通知"><svg class="i16" viewBox="0 0 16 16" fill="#0a48a0"><path d="M8 0q5 0 5 6 0 4 2 6v1H1v-1q2-2 2-6 0-6 5-6zM5.500 14h5q-.5 2-2.500 2t-2.500-2z"/></svg></button>
    </div>
  </div>
</div>
</body>
</html>
```
FILE: styles.css
```css
* { box-sizing: border-box; }
body { margin: 0; font: 11px/16px "Open Sans", "Noto Sans CJK SC", sans-serif; color: #444; background: #f1f1f1; }
button { border: 0; padding: 0; background: none; font: inherit; color: inherit; display: flex; align-items: center; }
svg { display: block; flex: none; }
.defs { position: absolute; width: 0; height: 0; }
.i10 { width: 10px; height: 10px; }
.i12 { width: 12px; height: 12px; }
.i16 { width: 16px; height: 16px; }
.i24 { width: 24px; height: 24px; }
.i32 { width: 32px; height: 32px; }
.i38 { width: 38px; height: 38px; }
.caret { width: 6px; height: 5px; }
.eye { width: 16px; height: 12px; }

.app { height: 100vh; display: flex; flex-direction: column; overflow: hidden; }

.titlebar { height: 30px; flex: none; display: flex; align-items: center; background: #f3f3f3; border-top: 1px solid #777; padding: 0 18px 0 7px; }
.title { margin: 0 0 0 5px; font: 400 12px/16px Roboto, "Noto Sans CJK SC", sans-serif; color: #8b8b8b; flex: 1; }
.winbtns { display: flex; gap: 34px; }

.tabbar { height: 31px; flex: none; display: flex; align-items: center; background: #cacaca; color: #555; padding-right: 11px; }
.quick { width: 191px; display: flex; flex: none; padding-left: 7px; color: #777; }
.quick button { gap: 4px; }
.q1 { width: 34px; }
.q2 { width: 43px; color: #555; }
.q3 { width: 33px; }
.q4 { width: 38px; }
.doc { flex: 1; align-self: flex-end; height: 27px; display: flex; align-items: center; justify-content: center; gap: 4px; padding-right: 12px; font-size: 12px; border-radius: 3px 3px 0 0; position: relative; }
.doc-off { background: #b9b9b9; color: #777; margin-right: 3px; }
.doc-on { background: #f1f1f1; }
.x { position: absolute; right: 6px; top: 8px; color: #777; }
.plus { width: 27px; height: 27px; margin-left: 5px; align-self: flex-end; justify-content: center; background: #b9b9b9; border-radius: 3px 3px 0 0; }
.buy { width: 68px; height: 24px; margin: 0 12px 0 7px; justify-content: center; background: #fba31c; color: #fff; border-radius: 3px; }
.jobs { width: 41px; height: 24px; margin: 0 11px 0 12px; padding-left: 4px; gap: 4px; background: #949494; color: #fff; border-radius: 3px; }
.t2 { margin-right: 17px; }
.t2 + .t2 { margin-right: 18px; }

.ribbon { flex: none; height: 82px; display: flex; border-bottom: 2px solid #dcdcdc; background: #f1f1f1; padding-left: 11px; }
.workspace { width: 108px; height: 61px; margin: 10px 4px 0 0; justify-content: center; gap: 6px; border: 1px solid #d4d4d4; border-radius: 3px; color: #222; font-weight: 500; }
.rtabs { display: flex; gap: 21px; height: 23px; padding-left: 13px; }
.rtabs button { padding: 3px 12px 0; border-bottom: 3px solid transparent; }
.rtabs .on { color: #0696d7; border-color: #0696d7; font-weight: 700; }
.groups { display: flex; }
.group { display: flex; flex-direction: column; align-items: center; padding: 0 11px; border-right: 1px solid #d4d4d4; height: 54px; margin-top: 3px; }
.group.solo { padding: 0 12px; }
.group.modify { padding: 0 10px 0 12px; }
.group.last { border: 0; padding: 0 8px; }
.icons { display: flex; gap: 10px; height: 34px; align-items: center; }
.glabel { gap: 4px; height: 20px; margin-top: 1px; flex: none; }
.select { background: #0696d7; }

.canvas { flex: 1; position: relative; z-index: 1; border-top: 2px solid #f5f5f5; background: #fff; min-height: 0; }
.grid { width: 100%; height: 100%; }
.viewcube { position: absolute; right: 12px; top: 5px; width: 76px; height: 86px; }
.face { font-size: 18px; font-weight: 300; fill: #9a9a9a; }
.axis { font: 12px Roboto, sans-serif; }
.axis.y { fill: #7df27d; }
.axis.z { fill: #7474f0; }
.axis.xx { fill: #ff8080; }

.browser { position: absolute; left: 34px; top: 15px; bottom: -9px; width: 294px; display: flex; flex-direction: column; background: #f1f1f1; border: 1px solid #cfcfcf; }
.bhead, .bfoot { flex: none; height: 23px; display: flex; align-items: center; gap: 8px; padding-left: 4px; border-bottom: 1px solid #cfcfcf; }
.bfoot { height: 25px; border-top: 1px solid #cfcfcf; border-bottom: 0; }
.tree { flex: 1; padding-top: 3px; }
.row { height: 24px; display: flex; align-items: center; padding-left: 34px; white-space: nowrap; }
.root { padding-left: 15px; }
.node { display: flex; align-items: center; gap: 10px; width: 84px; height: 16px; margin: 0 4px 0 6px; padding-left: 3px; background: #8f8f8f; color: #fff; }
.node b { border-left: 1px solid #aaa; padding-left: 3px; }
.root input { appearance: none; width: 14px; height: 14px; margin: 0; border: 1px solid #777; border-radius: 50%; background: radial-gradient(#333 2px, #dfe4ea 4px); }
.tri { width: 8px; height: 10px; margin-right: 12px; }
.gear { width: 14px; height: 14px; margin-right: 11px; color: #777; }
.folder { width: 16px; height: 13px; margin-right: 12px; }
.row .eye { margin-right: 8px; }
.root .eye { margin: 0 0 0 12px; }
.deep .folder { margin-right: 16px; }

.menu { position: absolute; left: 145px; top: 60px; width: 141px; padding: 2px 3px 1px; background: #fff; border: 1px solid #999; box-shadow: 1px 1px 1px #bbb; }
.mi { width: 100%; height: 20px; padding-left: 21px; text-align: left; }
.mi > span { width: 77px; white-space: nowrap; }
.icon { height: 23px; }
.tall { height: 24px; }
.icon, .tall { padding-left: 0; gap: 5px; }
.hot { background: #d6d6d6; }
.menu hr { margin: 0; border: 0; height: 1px; background: #bbb; }
.menu hr.dark { background: #888; }
.menu hr.thick { height: 2px; background: #777; }
kbd { font: inherit; }
.wheel { width: 14px; height: 14px; margin: 0 1px; flex: none; border-radius: 50%; background: conic-gradient(#f5842b 0 60deg, #ef4545 60deg 120deg, #8a4ad8 120deg 180deg, #2e7ce0 180deg 240deg, #35bf60 240deg 310deg, #f2c02e 310deg); }
.sub { width: 6px; height: 8px; margin-left: 25px; }

.tip { position: absolute; left: 280px; top: 116px; width: 261px; height: 98px; padding: 0 4px; background: #f9f9f9; border: 1px solid #ddd; box-shadow: 1px 1px 1px #8a8a8a; font-size: 12px; color: #111; white-space: nowrap; }
.tip p { margin: 0 0 16px; }
.mark { position: absolute; left: 33px; top: 27px; width: 277px; height: 73px; border: 3px solid #ff2116; border-radius: 3px; }
.navbar { position: absolute; left: 50%; bottom: 7px; transform: translateX(-50%); height: 23px; display: flex; align-items: center; gap: 10px; padding: 0 4px 0 2px; background: #f1f1f1; color: #222; }
.navbar .wide { gap: 4px; }
.navbar .wide:first-child { margin-right: -4px; }
.navbar .duo { gap: 2px; margin-left: -4px; }
.docname { position: absolute; right: 17px; bottom: 8px; color: #222; }

.timeline { position: relative; z-index: 2; flex: none; height: 49px; display: flex; gap: 9px; padding: 0 13px 0 8px; border-bottom: 1px solid #bbb; }
.timeline > button { height: 48px; }
.marker { width: 12px; height: 32px; margin: 10px 0 0; }
.timeline .set { margin-left: auto; color: #777; }
.meter { position: absolute; left: 0; bottom: 0; width: 34px; height: 96px; background: rgba(110, 112, 122, .5); border-radius: 0 10px 0 0; display: flex; flex-direction: column; align-items: center; color: #fff; padding-top: 10px; }
.dot { width: 11px; height: 11px; border-radius: 50%; background: #0cbc67; }
.level { width: 10px; height: 18px; margin: 28px 0 14px; border-radius: 0 0 5px 5px; background: linear-gradient(#dba51b, #96c63a, #43b9a6); }

.taskbar { flex: none; height: 47px; display: grid; grid-template-columns: 1fr auto 1fr; align-items: center; background: linear-gradient(90deg, #cde0dd, #dbdad7 12%, #dcdbd9 65%, #eadbd3 82%, #ebdbd4 90%, #dcdcd9); color: #333; }
.weather { gap: 4px; padding-left: 18px; text-align: left; }
.wx { width: 28px; height: 30px; margin-top: -3px; }
.dock { display: flex; align-items: center; gap: 6px; }
.app-i { width: 38px; height: 38px; justify-content: center; position: relative; border-radius: 4px; }
.run::after { content: ""; position: absolute; bottom: 0; left: 16px; width: 6px; height: 3px; border-radius: 2px; background: #777; }
.active { background: #efefee; }
.active::after { left: 11px; width: 16px; background: #0078d4; }
.search { width: 214px; height: 30px; display: flex; align-items: center; gap: 9px; padding: 0 6px 0 11px; border-radius: 15px; background: #f4f4f3; border: 1px solid #e6e6e5; }
.search input { flex: 1; min-width: 0; border: 0; padding: 0; background: none; font: inherit; font-size: 14px; outline: 0; }
.search input::placeholder { color: #555; opacity: 1; }
.palms { width: 46px; height: 24px; }
.tray { display: flex; align-items: center; justify-content: flex-end; padding-right: 19px; }
.ime { margin-left: 18px; }
.sogou { margin: 0 21px; }
.net { gap: 8px; }
.tray time { margin: 0 8px 0 18px; text-align: right; }
```
